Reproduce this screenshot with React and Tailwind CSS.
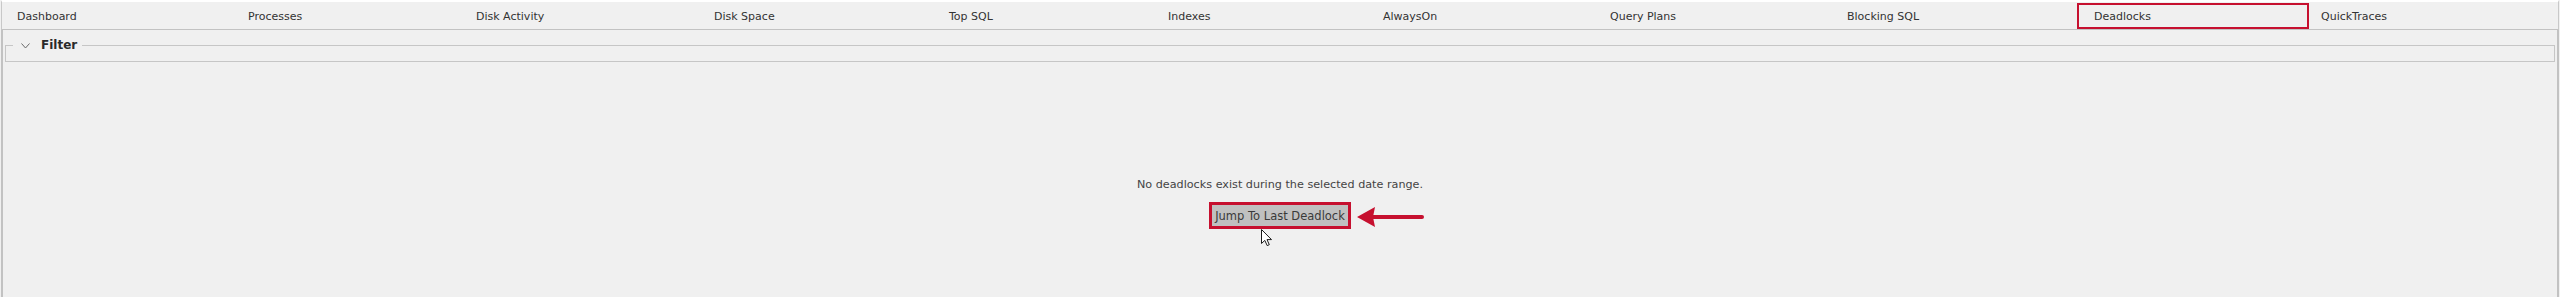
import React from "react";

const tabs = [
  { label: "Dashboard", w: "w-[231px]" },
  { label: "Processes", w: "w-[228px]" },
  { label: "Disk Activity", w: "w-[238px]" },
  { label: "Disk Space", w: "w-[235px]" },
  { label: "Top SQL", w: "w-[219px]" },
  { label: "Indexes", w: "w-[215px]" },
  { label: "AlwaysOn", w: "w-[227px]" },
  { label: "Query Plans", w: "w-[237px]" },
  { label: "Blocking SQL", w: "w-[247px]" },
  { label: "Deadlocks", w: "w-[227px]", active: true },
  { label: "QuickTraces", w: "flex-1" },
];

function Cursor() {
  return (
    <svg width="13" height="19" viewBox="0 0 13 19" className="absolute left-[51px] top-[26px]">
      <path
        d="M1.5 1.5 L1.5 15.5 L4.8 12.4 L7.2 17.6 L9.3 16.7 L7 11.6 L11.5 11.6 Z"
        fill="#ffffff"
        stroke="#1a1a1a"
        strokeWidth="1"
        strokeLinejoin="miter"
      />
    </svg>
  );
}

function RedArrow() {
  return (
    <svg
      width="70"
      height="22"
      viewBox="0 0 70 22"
      className="absolute left-[calc(100%+5px)] top-[4px]"
    >
      <line x1="16" y1="11" x2="66" y2="11" stroke="#c6102f" strokeWidth="4" strokeLinecap="round" />
      <path d="M1 11 L19 1 L17 11 L19 21 Z" fill="#c6102f" />
    </svg>
  );
}

export default function App() {
  return (
    <div className="w-[2560px] h-[297px] bg-[#f0f0f0] px-[1px] flex flex-col font-['DejaVu_Sans',Verdana,sans-serif] text-[#333333] overflow-hidden">
      {/* Tab strip */}
      <div className="flex h-[30px] border-t-2 border-t-white border-x border-x-[#c8c8c8] border-b border-b-[#c2c2c2]">
        {tabs.map((t) => (
          <div
            key={t.label}
            className={`${t.w} relative flex items-center pl-[15px] pt-[1px] text-[11px] leading-[13px] whitespace-nowrap`}
          >
            {t.label}
            {t.active && (
              <div className="absolute left-[-2px] top-[1px] w-[232px] h-[26px] border-2 border-[#c6102f]" />
            )}
          </div>
        ))}
      </div>

      {/* Panel */}
      <div className="flex-1 border-x-2 border-[#c2c2c2] flex flex-col">
        <fieldset className="mt-[8px] mx-[2px] h-[24px] border border-[#c6c6c6]">
          <legend className="ml-[7px] pl-[8px] pr-[5px] h-[15px] flex items-center">
            <svg width="9" height="6" viewBox="0 0 9 6" className="mr-[11px]">
              <polyline points="0.5,0.5 4.5,5 8.5,0.5" fill="none" stroke="#6a6a6a" strokeWidth="1" />
            </svg>
            <span className="text-[12px] leading-[15px] font-bold text-[#2a2a2a]">Filter</span>
          </legend>
        </fieldset>

        <div className="flex flex-col items-center pt-[116px]">
          <div className="text-[11.2px] leading-[14px] text-[#444444] whitespace-nowrap">
            No deadlocks exist during the selected date range.
          </div>
          <div className="relative mt-[10px]">
            <button className="w-[142px] h-[27px] border-[3px] border-[#c6102f] bg-[#c0c0c0] flex items-center justify-center text-[11.5px] leading-[14px] text-[#3a3a3a] whitespace-nowrap">
              Jump To Last Deadlock
            </button>
            <RedArrow />
            <Cursor />
          </div>
        </div>
      </div>
    </div>
  );
}
